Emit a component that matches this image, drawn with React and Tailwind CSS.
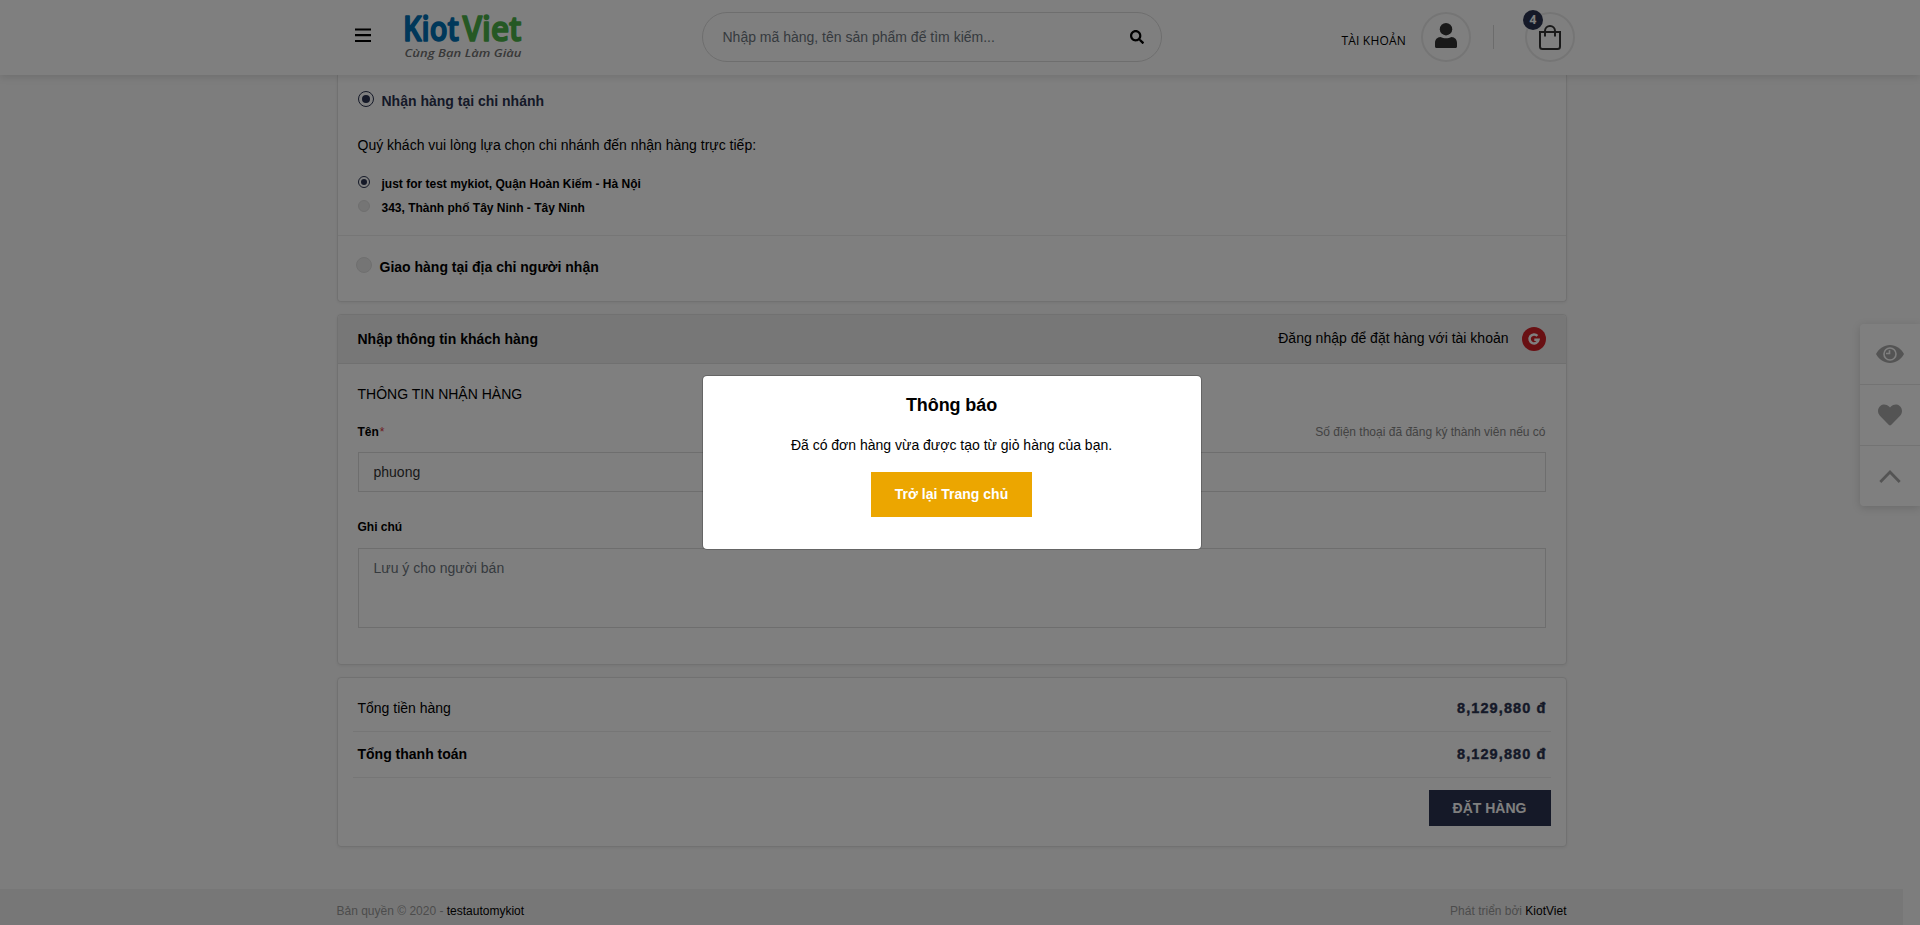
import React from "react";
import { FaSearch, FaHeart } from "react-icons/fa";

function Radio({ checked, small }) {
  const size = small ? "size-3" : "size-4";
  if (!checked) {
    return <span className={`${size} shrink-0 rounded-full border border-[#dedede] bg-[#ebebeb]`} />;
  }
  return (
    <span className={`${size} flex shrink-0 items-center justify-center rounded-full border border-[#2a3350] bg-white`}>
      <span className={`${small ? "size-1.5" : "size-2"} rounded-full bg-[#2a3350]`} />
    </span>
  );
}

function Logo() {
  return (
    <svg width="124" height="60" viewBox="-4 -10 124 60" className="block overflow-visible">
      <g fontFamily="'Open Sans', sans-serif" fontSize="34.500" fontWeight="600" strokeWidth="1.600" strokeLinejoin="round">
        <text x="-2" y="28.500" textLength="56" lengthAdjust="spacingAndGlyphs" fill="#0070b4" stroke="#0070b4">Kiot</text>
        <text x="57.500" y="28.500" textLength="59" lengthAdjust="spacingAndGlyphs" fill="#4bb148" stroke="#4bb148">Viet</text>
      </g>
      <text x="-0.500" y="44.500" textLength="117" lengthAdjust="spacingAndGlyphs" fontFamily="'Open Sans', sans-serif" fontSize="11.500" fontStyle="italic" fontWeight="600" fill="#707070">
        Cùng Bạn Làm Giàu
      </text>
    </svg>
  );
}

function Header() {
  return (
    <header className="relative z-10 h-[75px] w-full shrink-0 bg-white shadow-[0_2px_8px_rgba(0,0,0,0.12)]">
      <div className="ml-[354.5px] flex h-[75px] w-[1220.5px] items-start">
        <svg className="mt-7 shrink-0" width="16" height="15" viewBox="0 0 16 15">
          <path d="M0 1.500h16M0 7.200h16M0 13h16" stroke="#000" strokeWidth="2.200" />
        </svg>
        <div className="ml-[30px] mt-0.5 w-[124px]">
          <Logo />
        </div>
        <div className="ml-[177px] mt-3 flex h-[50px] w-[460px] items-center justify-between rounded-full border border-[#dcdcdc] pl-5 pr-[17px]">
          <span className="text-[14px] text-[#6c757d]">Nhập mã hàng, tên sản phẩm để tìm kiếm...</span>
          <FaSearch className="size-3.5 text-black" />
        </div>
        <div className="ml-auto mt-3 flex h-[50px] items-center">
          <span className="mt-2 font-['Open_Sans',sans-serif] text-[12px] tracking-[0.2px]">TÀI KHOẢN</span>
          <div className="ml-[15px] flex size-[50px] items-center justify-center rounded-full border-2 border-[#ebebeb]">
            <svg width="22" height="25" viewBox="0 0 22 25" fill="#333" className="-mt-[3px]">
              <circle cx="11" cy="6.200" r="6.200" />
              <path d="M5.500 14c1.700 1 3.500 1.300 5.500 1.300s3.800-.3 5.500-1.300C20 14.200 22 16.800 22 20v3.500c0 .9-.6 1.500-1.500 1.500h-19C.6 25 0 24.400 0 23.500V20c0-3.200 2-5.800 5.500-6z" />
            </svg>
          </div>
          <div className="ml-[22px] h-6 w-px bg-[#d9d9d9]" />
          <div className="relative ml-[31px] flex size-[50px] items-center justify-center rounded-full border-2 border-[#ebebeb]">
            <svg width="22" height="25" viewBox="0 0 22 25" fill="none" stroke="#333" strokeWidth="2">
              <path d="M1 7h20v14.500c0 1.500-1 2.500-2.500 2.500h-15C2 24 1 23 1 21.500zM6 11.500V6a5 5 0 0 1 10 0v5.500" />
            </svg>
            <span className="absolute -left-1 -top-1 flex size-5 items-center justify-center rounded-full bg-[#2a3350] font-['Open_Sans',sans-serif] text-[12px] font-bold text-white">4</span>
          </div>
        </div>
      </div>
    </header>
  );
}

function DeliveryCard() {
  return (
    <section className="h-[227px] rounded-b border border-t-0 border-[#e3e3e3] bg-white shadow-[0_1px_3px_rgba(0,0,0,0.06)]">
      <div className="flex h-[161px] flex-col border-b border-[#ececec] pl-5 pt-4">
        <div className="flex h-4 items-center gap-2 font-bold text-[#2a3350]">
          <Radio checked />
          <span className="pt-1">Nhận hàng tại chi nhánh</span>
        </div>
        <p className="mt-7 leading-5">Quý khách vui lòng lựa chọn chi nhánh đến nhận hàng trực tiếp:</p>
        <div className="mt-[21px] flex h-3 items-center gap-3 text-[12px] font-bold">
          <Radio checked small />
          <span className="pt-1">just for test mykiot, Quận Hoàn Kiếm - Hà Nội</span>
        </div>
        <div className="mt-3 flex h-3 items-center gap-3 text-[12px] font-bold">
          <Radio small />
          <span className="pt-1">343, Thành phố Tây Ninh - Tây Ninh</span>
        </div>
      </div>
      <div className="mt-[21px] flex h-4 items-center gap-2 pl-[18px] font-bold">
        <Radio />
        <span className="pt-1">Giao hàng tại địa chỉ người nhận</span>
      </div>
    </section>
  );
}

function CustomerCard() {
  return (
    <section className="mt-3 h-[351px] rounded border border-[#e3e3e3] bg-white shadow-[0_1px_3px_rgba(0,0,0,0.06)]">
      <div className="flex h-[49px] items-center justify-between rounded-t border-b border-[#e0e0e0] bg-[#efefef] px-5">
        <h2 className="font-bold">Nhập thông tin khách hàng</h2>
        <div className="flex items-center gap-[13px]">
          <span className="-mt-0.5">Đăng nhập để đặt hàng với tài khoản</span>
          <svg width="24" height="24" viewBox="0 0 24 24">
            <circle cx="12" cy="12" r="12" fill="#d32027" />
            <path d="M15.400 8.900A4.500 4.500 0 1 0 16.500 12.700H12.300" fill="none" stroke="#fff" strokeWidth="2.500" />
          </svg>
        </div>
      </div>
      <div className="px-5 pt-5">
        <h3 className="leading-5">THÔNG TIN NHẬN HÀNG</h3>
        <div className="mt-5 flex h-4 items-center justify-between text-[12px]">
          <label className="font-bold">
            Tên<span className="ml-px font-normal text-[#dc3545]">*</span>
          </label>
          <span className="text-[#868686]">Số điện thoại đã đăng ký thành viên nếu có</span>
        </div>
        <div className="mt-3 flex h-10 items-center border border-[#dcdcdc] px-[15px] text-[#333]">phuong</div>
        <label className="mt-[27px] block text-[12px] font-bold leading-4">Ghi chú</label>
        <div className="mt-[13px] h-20 border border-[#dcdcdc] px-[15px] pt-[9px] leading-5 text-[#6c757d]">Lưu ý cho người bán</div>
      </div>
    </section>
  );
}

function TotalRow({ label, bold }) {
  return (
    <div className="flex h-[46px] items-center justify-between border-b border-[#ececec] px-[5px]">
      <span className={bold ? "font-bold" : ""}>{label}</span>
      <span className="-mr-px text-[14.5px] font-bold tracking-[1.1px] text-[#2a3350] [-webkit-text-stroke:0.4px_#2a3350]">8,129,880 đ</span>
    </div>
  );
}

function TotalCard() {
  return (
    <section className="mt-3 h-[170px] rounded border border-[#e3e3e3] bg-white px-[15px] pt-2 shadow-[0_1px_3px_rgba(0,0,0,0.06)]">
      <TotalRow label="Tổng tiền hàng" />
      <TotalRow label="Tổng thanh toán" bold />
      <div className="mt-3 flex justify-end">
        <button className="h-9 w-[122px] bg-[#2a3350] font-bold text-white">ĐẶT HÀNG</button>
      </div>
    </section>
  );
}

function SideBar() {
  return (
    <aside className="absolute right-0 top-[324px] flex h-[182px] w-[60px] flex-col rounded-l bg-white text-[#a9a9a9] shadow-[0_2px_8px_rgba(0,0,0,0.15)]">
      <div className="flex h-[61px] items-center justify-center border-b border-[#e6e6e6]">
        <svg width="28" height="18" viewBox="0 0 28 18">
          <path d="M14 0C8 0 3 3.500 0 9c3 5.500 8 9 14 9s11-3.500 14-9C25 3.500 20 0 14 0z" fill="#a9a9a9" />
          <circle cx="14" cy="9" r="6" fill="none" stroke="#fff" strokeWidth="1.600" />
          <path d="M13.500 5.200v3.300H10" fill="none" stroke="#fff" strokeWidth="1.600" />
        </svg>
      </div>
      <div className="flex h-[61px] items-center justify-center border-b border-[#e6e6e6]">
        <FaHeart className="size-6" />
      </div>
      <div className="flex h-[60px] items-center justify-center">
        <svg width="22" height="13" viewBox="0 0 22 13" fill="none" stroke="#a9a9a9" strokeWidth="2.800">
          <path d="M1.300 12 11 2 20.700 12" />
        </svg>
      </div>
    </aside>
  );
}

export default function App() {
  return (
    <div className="relative flex h-[925px] w-[1920px] flex-col overflow-hidden bg-[#fafafa] font-['Liberation_Sans',Arial,sans-serif] text-[14px] text-black">
      <Header />
      <main className="ml-[336.5px] w-[1230px]">
        <DeliveryCard />
        <CustomerCard />
        <TotalCard />
      </main>
      <footer className="mt-[42px] flex h-9 w-[1903px] shrink-0 items-start bg-[#efefef] pl-[336.5px] pr-[336.5px] pt-3.5 text-[12px] leading-4 text-[#999]">
        <span>Bản quyền © 2020 - <a className="text-black">testautomykiot</a></span>
        <span className="ml-auto">Phát triển bởi <a className="text-black">KiotViet</a></span>
      </footer>
      <SideBar />
      <div className="absolute inset-0 z-20 bg-black/50 pl-[701.5px] pt-[375px]">
        <div role="dialog" className="flex h-[175px] w-[500px] flex-col items-center rounded-[5px] border border-black/20 bg-white bg-clip-padding pt-[18px]">
          <h1 className="text-[18px] font-bold leading-[22px] tracking-[-0.1px]">Thông báo</h1>
          <p className="mt-[19px] leading-5">Đã có đơn hàng vừa được tạo từ giỏ hàng của bạn.</p>
          <button className="mt-[17px] h-[45px] w-[161px] bg-[#eca600] font-bold text-white">Trở lại Trang chủ</button>
        </div>
      </div>
    </div>
  );
}
